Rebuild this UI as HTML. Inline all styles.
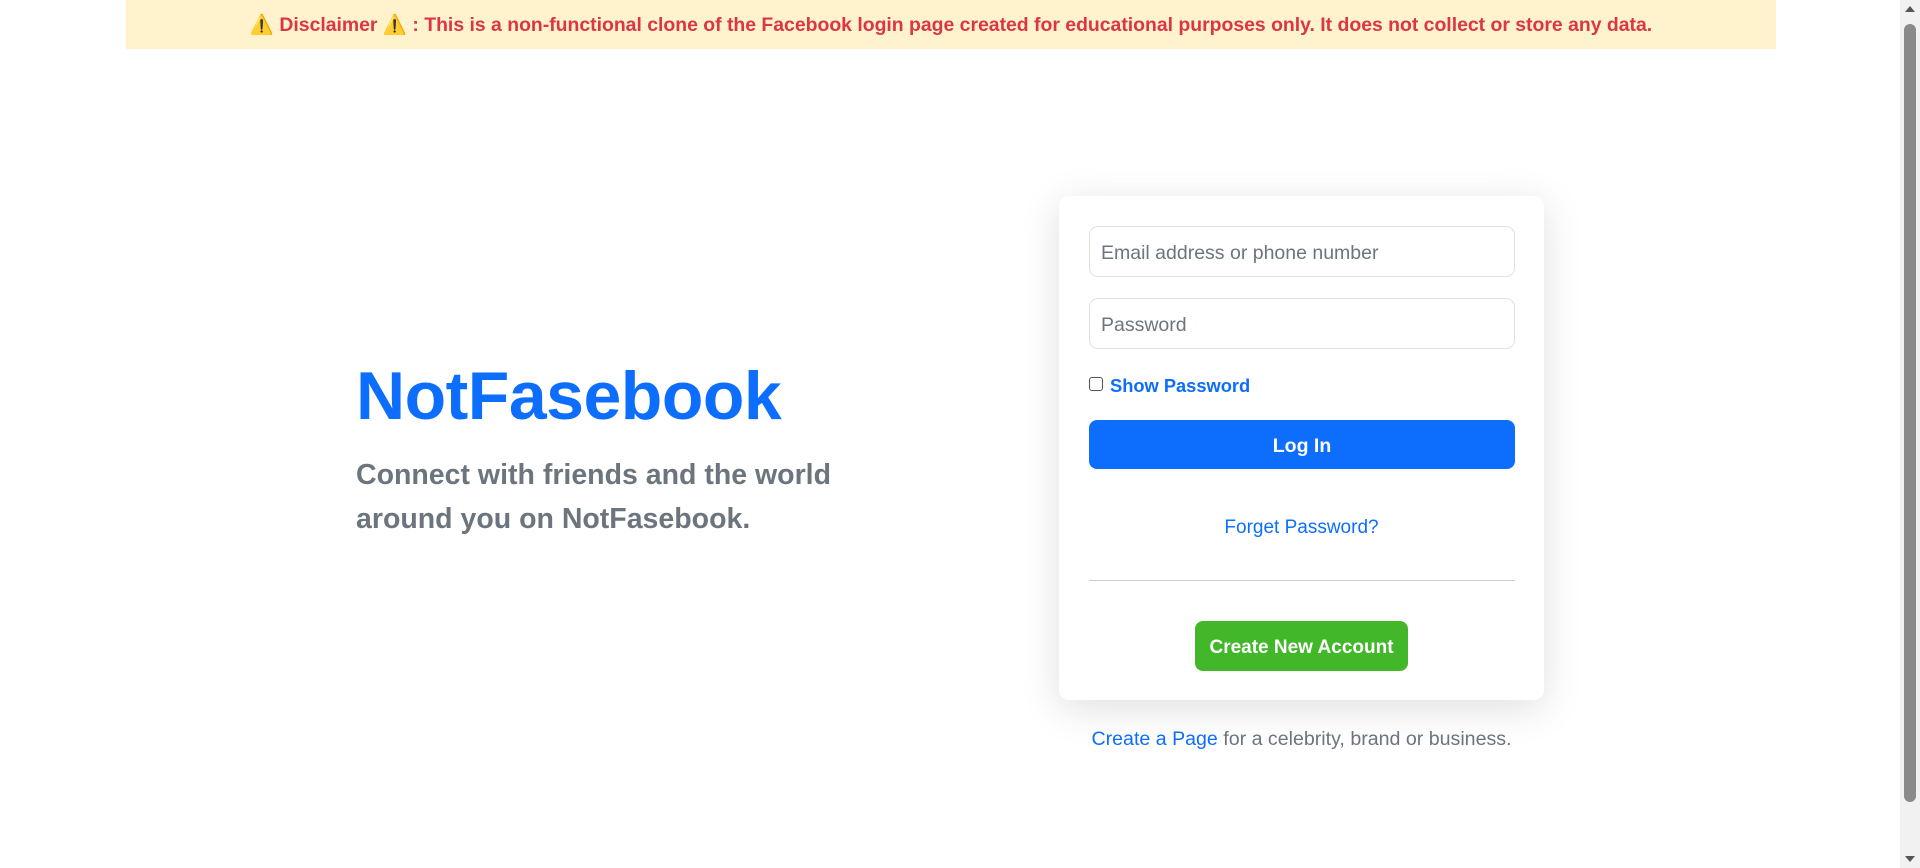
<!DOCTYPE html>
<html><head><meta charset="utf-8"><style>
*{box-sizing:border-box;margin:0;padding:0}
body{width:1920px;height:868px;overflow:hidden;background:#fff;font-family:"Liberation Sans",sans-serif;position:relative}
.banner{position:absolute;left:126px;top:0;width:1650px;height:49px;background:#fff3cd;color:#dc3545;font-weight:bold;font-size:19.4px;text-align:center;line-height:51px}
.sb{position:absolute;right:0;top:0;width:20px;height:868px;background:#f1f1f1}
.thumb{position:absolute;right:4px;top:24px;width:12px;height:778px;background:#8a8a8a;border-radius:6px}
.arr{position:absolute;right:5px;width:0;height:0;border-left:5px solid transparent;border-right:5px solid transparent}
h1{position:absolute;left:356px;top:354px;font-size:68px;color:#0d6efd;font-weight:bold;line-height:84px;letter-spacing:-0.5px}
.sub{position:absolute;left:356px;top:453px;font-size:28.5px;color:#6c757d;line-height:44px;font-weight:bold;width:520px}
.card{position:absolute;left:1059px;top:196px;width:485px;height:504px;background:#fff;border-radius:10px;box-shadow:0 8px 40px rgba(0,0,0,.13)}
.inp{position:absolute;left:30px;width:426px;height:51px;border:1px solid #dee2e6;border-radius:9px;font-size:19.5px;color:#6c757d;padding-left:11px;line-height:53px}
.cb{position:absolute;left:30px;top:181px;width:14px;height:14px;border:1.5px solid #555;border-radius:3px}
.show{position:absolute;left:51px;top:179px;font-size:18.3px;color:#0d6efd;font-weight:bold}
.login{position:absolute;left:30px;top:224px;width:426px;height:49px;background:#0d6efd;border-radius:8px;color:#fff;font-weight:bold;font-size:19.5px;text-align:center;line-height:52px}
.forgot{position:absolute;left:0;width:485px;top:321px;text-align:center;color:#0d6efd;font-size:19px}
.hr{position:absolute;left:30px;top:384px;width:426px;height:1px;background:#ccc}
.create{position:absolute;left:136px;top:425px;width:213px;height:50px;background:#42b72a;border-radius:8px;color:#fff;font-weight:bold;font-size:19px;text-align:center;line-height:53px}
.foot{position:absolute;left:1059px;width:485px;top:728px;text-align:center;color:#6c757d;font-size:19.6px}
.foot a{color:#0d6efd;text-decoration:none}
</style></head><body>
<div class="banner">⚠️ Disclaimer ⚠️ : This is a non-functional clone of the Facebook login page created for educational purposes only. It does not collect or store any data.</div>
<div class="sb"><div class="arr" style="top:6px;border-bottom:6px solid #555"></div><div class="thumb"></div><div class="arr" style="bottom:6px;border-top:6px solid #555"></div></div>
<h1>NotFasebook</h1>
<div class="sub">Connect with friends and the world around you on NotFasebook.</div>
<div class="card">
<div class="inp" style="top:30px">Email address or phone number</div>
<div class="inp" style="top:102px">Password</div>
<div class="cb"></div><div class="show">Show Password</div>
<div class="login">Log In</div>
<div class="forgot">Forget Password?</div>
<div class="hr"></div>
<div class="create">Create New Account</div>
</div>
<div class="foot"><a>Create a Page</a> for a celebrity, brand or business.</div>
</body></html>
